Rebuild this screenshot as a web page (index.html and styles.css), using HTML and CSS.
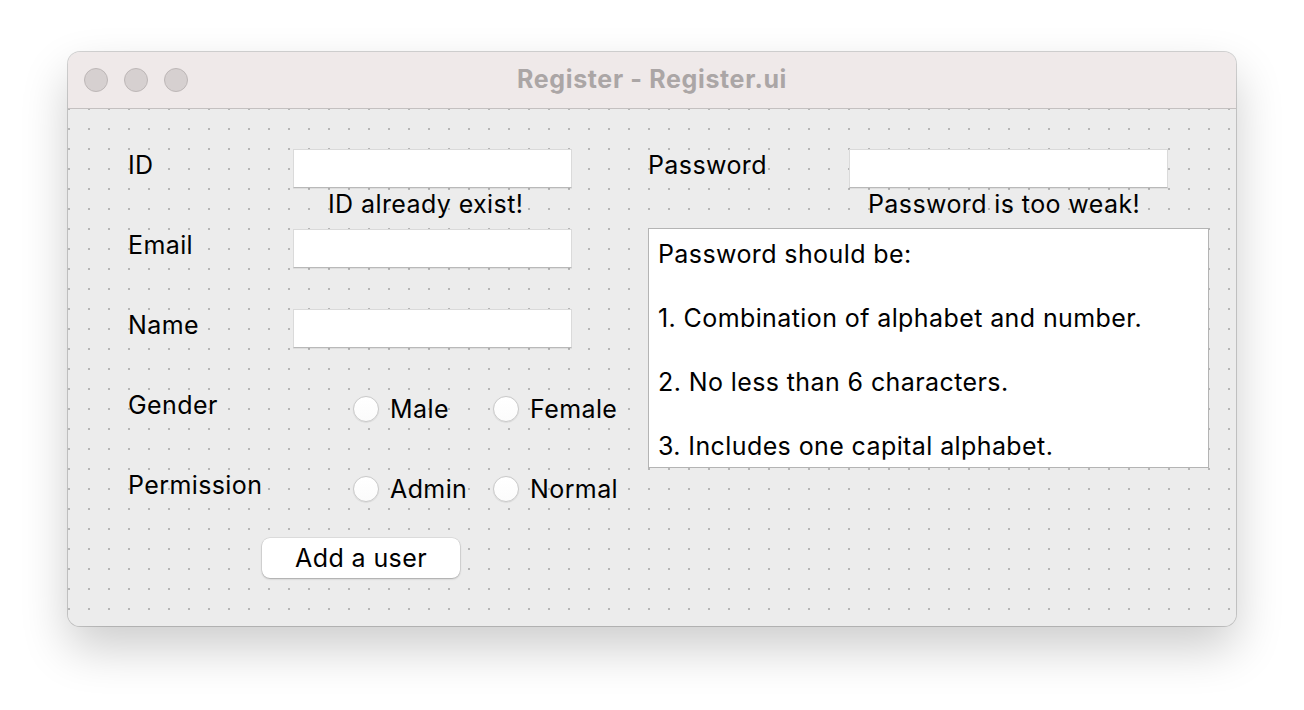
FILE: index.html
```html
<!DOCTYPE html>
<html>
<head>
<meta charset="utf-8">
<title>Register - Register.ui</title>
<link rel="stylesheet" href="styles.css">
</head>
<body>
<div class="window">
  <div class="titlebar">
    <div class="lights">
      <span class="light"></span><span class="light"></span><span class="light"></span>
    </div>
    <div class="title">Register - Register.ui</div>
    <div></div>
  </div>
  <div class="content">
    <div class="col-left">
      <div class="field">
        <div class="line">
          <span class="label">ID</span>
          <span class="input"></span>
        </div>
        <div class="msg msg-id">ID already exist!</div>
      </div>
      <div class="field">
        <div class="line">
          <span class="label">Email</span>
          <span class="input"></span>
        </div>
      </div>
      <div class="field">
        <div class="line">
          <span class="label">Name</span>
          <span class="input"></span>
        </div>
      </div>
      <div class="field">
        <div class="line">
          <span class="label">Gender</span>
          <div class="radios">
            <label class="radio"><span class="circle"></span>Male</label>
            <label class="radio"><span class="circle"></span>Female</label>
          </div>
        </div>
      </div>
      <div class="field field-last">
        <div class="line">
          <span class="label">Permission</span>
          <div class="radios">
            <label class="radio"><span class="circle"></span>Admin</label>
            <label class="radio"><span class="circle"></span>Normal</label>
          </div>
        </div>
      </div>
      <div class="button">Add a user</div>
    </div>
    <div class="col-right">
      <div class="line">
        <span class="label label-pw">Password</span>
        <span class="input input-pw"></span>
      </div>
      <div class="msg msg-pw">Password is too weak!</div>
      <div class="textbox">
        <div class="tline">Password should be:</div>
        <div class="tline"></div>
        <div class="tline">1. Combination of alphabet and number.</div>
        <div class="tline"></div>
        <div class="tline">2. No less than 6 characters.</div>
        <div class="tline"></div>
        <div class="tline">3. Includes one capital alphabet.</div>
      </div>
    </div>
  </div>
</div>
</body>
</html>
```

FILE: styles.css
```css
html, body {
  margin: 0;
  padding: 0;
  background: #ffffff;
}
body {
  height: 710px;
  box-sizing: border-box;
  padding: 52px 0 0 68px;
  font-family: Inter, "Liberation Sans", Arial, sans-serif;
  color: #000;
}
.window {
  width: 1168px;
  height: 574px;
  border-radius: 12px;
  background: #ececec;
  box-shadow: 0 0 0 1px rgba(0,0,0,0.17), 0 22px 48px rgba(0,0,0,0.2);
  overflow: hidden;
  display: flex;
  flex-direction: column;
}
.titlebar {
  height: 57px;
  box-sizing: border-box;
  background: #efe9e9;
  border-bottom: 1px solid #c4c0c0;
  display: grid;
  grid-template-columns: 1fr auto 1fr;
  align-items: center;
}
.lights {
  display: flex;
  gap: 16px;
  padding-left: 16px;
}
.light {
  width: 22px;
  height: 22px;
  border-radius: 50%;
  background: #d6d0d0;
  border: 1px solid #bdb7b7;
}
.title {
  font-weight: bold;
  font-size: 25px;
  letter-spacing: 0.65px;
  line-height: 30px;
  color: #aba6a6;
  padding-bottom: 2px;
}
.content {
  flex: 1;
  display: flex;
  padding: 40px 0 0 60px;
  background-color: #ececec;
  background-image: radial-gradient(circle, #b6b6b6 1px, rgba(182,182,182,0) 1.1px);
  background-size: 20px 20px;
  background-position: -9px 10px;
  font-size: 25px;
  letter-spacing: 0.4px;
}
.col-left {
  width: 520px;
  display: flex;
  flex-direction: column;
}
.field {
  height: 80px;
}
.field-last {
  height: 69px;
}
.line {
  display: flex;
  align-items: flex-start;
}
.label {
  width: 165px;
  flex: none;
  line-height: 32px;
}
.label-pw {
  width: 201px;
}
.input {
  width: 279px;
  height: 39px;
  box-sizing: border-box;
  background: #ffffff;
  border: 1px solid #dadada;
  border-bottom-color: #b9b9b9;
  box-shadow: 0 1px 0 rgba(0,0,0,0.06);
}
.input-pw {
  width: 319px;
}
.msg {
  line-height: 32px;
}
.msg-id {
  margin-left: 200px;
}
.msg-pw {
  margin-left: 220px;
}
.radios {
  display: flex;
  margin-left: 60px;
  margin-top: 4px;
}
.radio {
  width: 140px;
  height: 32px;
  display: flex;
  align-items: center;
  line-height: 32px;
}
.circle {
  width: 24px;
  height: 24px;
  border-radius: 50%;
  background: linear-gradient(#ffffff, #fbfbfb);
  border: 1px solid #c9c9c9;
  box-shadow: 0 0.5px 1px rgba(0,0,0,0.12);
  margin-right: 11px;
  flex: none;
}
.button {
  width: 198px;
  height: 40px;
  box-sizing: border-box;
  margin-left: 134px;
  background: #ffffff;
  border-radius: 8px;
  box-shadow: 0 0 0 0.5px rgba(0,0,0,0.12), 0 1px 2px rgba(0,0,0,0.25);
  text-align: center;
  line-height: 40px;
}
.col-right {
  width: 561px;
  display: flex;
  flex-direction: column;
}
.textbox {
  margin-top: 8px;
  height: 240px;
  box-sizing: border-box;
  background: #ffffff;
  border: 1px solid #b4b4b4;
  padding: 9px 0 0 9px;
}
.tline {
  height: 32px;
  line-height: 32px;
  white-space: nowrap;
}
```
